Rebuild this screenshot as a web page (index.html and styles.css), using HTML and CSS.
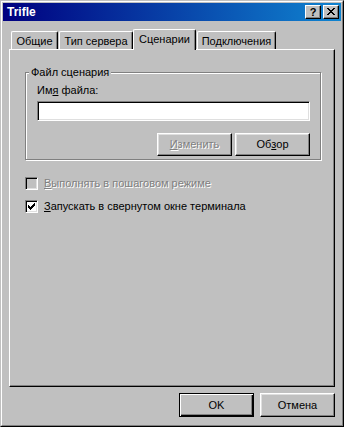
FILE: index.html
```html
<!DOCTYPE html>
<html>
<head>
<meta charset="utf-8">
<link rel="stylesheet" href="styles.css">
</head>
<body>
<div class="window">
  <div class="frame">
    <div class="titlebar">
      <span class="title">Trifle</span>
      <span class="tbtn help">?</span>
      <span class="tbtn close">
        <svg width="8" height="7" viewBox="0 0 8 7" shape-rendering="crispEdges">
          <path d="M0 0h2v1h-2zM6 0h2v1h-2zM1 1h2v1h-2zM5 1h2v1h-2zM2 2h4v1h-4zM3 3h2v1h-2zM2 4h4v1h-4zM1 5h2v1h-2zM5 5h2v1h-2zM0 6h2v1h-2zM6 6h2v1h-2z" fill="#000"/>
        </svg>
      </span>
    </div>
    <div class="body">
      <div class="tabs">
        <div class="tab t1">Общие</div>
        <div class="tab t2">Тип сервера</div>
        <div class="tab t3 active">Сценарии</div>
        <div class="tab t4">Подключения</div>
      </div>
      <div class="panel">
        <fieldset class="group">
          <legend>Файл сценария</legend>
          <div class="group-inner">
            <div class="label">Им<u>я</u> файла:</div>
            <div class="input"></div>
            <div class="btnrow">
              <div class="btn disabled"><span class="dtext"><u>И</u>зменить</span></div>
              <div class="btn">Об<u>з</u>ор</div>
            </div>
          </div>
        </fieldset>
        <div class="check first">
          <span class="box dis"></span>
          <span class="dtext"><u>В</u>ыполнять в пошаговом режиме</span>
        </div>
        <div class="check">
          <span class="box">
            <svg width="7" height="7" viewBox="0 0 7 7" shape-rendering="crispEdges">
              <path d="M0 2h1v3h-1zM1 3h1v3h-1zM2 4h1v3h-1zM3 3h1v3h-1zM4 2h1v3h-1zM5 1h1v3h-1zM6 0h1v3h-1z" fill="#000"/>
            </svg>
          </span>
          <span><u>З</u>апускать в свернутом окне терминала</span>
        </div>
      </div>
      <div class="footer">
        <div class="btn default">OK</div>
        <div class="btn">Отмена</div>
      </div>
    </div>
  </div>
</div>
</body>
</html>
```
FILE: styles.css
```css
html, body {
  margin: 0;
  padding: 0;
  background: #c0c0c0;
}
.window {
  width: 344px;
  height: 427px;
  box-sizing: border-box;
  border: 1px solid;
  border-color: #c0c0c0 #000 #000 #c0c0c0;
  background: #c0c0c0;
  display: flex;
  flex-direction: column;
  font: 11px "Liberation Sans", Arial, sans-serif;
  color: #000;
}
.frame {
  flex: 1;
  border: 1px solid;
  border-color: #fff #808080 #808080 #fff;
  padding: 1px;
  display: flex;
  flex-direction: column;
}
.titlebar {
  height: 18px;
  background: linear-gradient(to right, #000080, #1084d0);
  display: flex;
  align-items: center;
  padding: 0 2px 0 3px;
  color: #fff;
  font-weight: bold;
}
.title {
  flex: 1;
  line-height: 18px;
  font-size: 12px;
  padding-left: 1px;
}
.tbtn {
  width: 16px;
  height: 14px;
  box-sizing: border-box;
  background: #c0c0c0;
  border: 1px solid;
  border-color: #fff #000 #000 #fff;
  box-shadow: inset -1px -1px #808080;
  display: flex;
  align-items: center;
  justify-content: center;
  color: #000;
  font-size: 11px;
  font-weight: bold;
  line-height: 12px;
}
.tbtn.close {
  margin-left: 2px;
}
.tbtn.close svg {
  margin-top: -1px;
}
.body {
  flex: 1;
  padding: 8px 6px 7px 6px;
  display: flex;
  flex-direction: column;
}
.tabs {
  display: flex;
  align-items: flex-end;
  height: 20px;
  padding-left: 2px;
  position: relative;
  z-index: 1;
}
.tab {
  height: 18px;
  box-sizing: border-box;
  border-top: 1px solid #fff;
  border-left: 1px solid #fff;
  border-right: 1px solid #000;
  box-shadow: inset -1px 0 #808080;
  border-radius: 2px 2px 0 0;
  display: flex;
  align-items: center;
  justify-content: center;
  background: #c0c0c0;
  line-height: 13px;
  padding-top: 1px;
}
.t1 { width: 47px; }
.t2 { width: 74px; margin-left: 1px; }
.t3 { width: 63px; }
.t4 { width: 79px; margin-left: 1px; }
.tab.active {
  height: 21px;
  margin-bottom: -1px;
  padding-bottom: 2px;
}
.panel {
  flex: 1;
  border: 1px solid;
  border-color: #fff #000 #000 #fff;
  box-shadow: inset -1px -1px #808080;
  padding: 16px 13px 0 15px;
  display: flex;
  flex-direction: column;
}
.group {
  margin: 0;
  padding: 0;
  border: 1px solid #808080;
  box-shadow: inset 1px 1px #fff, 1px 1px #fff;
  min-width: 0;
}
.group legend {
  margin-left: 3px;
  padding: 0 2px;
  line-height: 13px;
  background: #c0c0c0;
}
.group-inner {
  padding: 5px 10px 3px 11px;
  display: flex;
  flex-direction: column;
}
.label {
  line-height: 13px;
}
.input {
  margin-top: 4px;
  height: 20px;
  box-sizing: border-box;
  background: #fff;
  border: 1px solid;
  border-color: #808080 #fff #fff #808080;
  box-shadow: inset 1px 1px #000, inset -1px -1px #dfdfdf;
}
.btnrow {
  display: flex;
  justify-content: flex-end;
  gap: 3px;
  margin-top: 12px;
}
.btn {
  width: 75px;
  height: 23px;
  box-sizing: border-box;
  border: 1px solid;
  border-color: #fff #000 #000 #fff;
  box-shadow: inset -1px -1px #808080, inset 1px 1px #dfdfdf;
  background: #c0c0c0;
  display: flex;
  align-items: center;
  justify-content: center;
  line-height: 13px;
}
.dtext {
  color: #808080;
  text-shadow: 1px 1px 0 #fff;
}
.check {
  display: flex;
  align-items: center;
  height: 13px;
  margin-top: 10px;
  gap: 6px;
  line-height: 13px;
}
.check.first {
  margin-top: 17px;
}
.box {
  width: 13px;
  height: 13px;
  box-sizing: border-box;
  border: 1px solid;
  border-color: #808080 #fff #fff #808080;
  box-shadow: inset 1px 1px #000, inset -1px -1px #dfdfdf;
  background: #fff;
  display: flex;
  align-items: center;
  justify-content: center;
}
.box.dis {
  background: #c0c0c0;
}
.footer {
  display: flex;
  justify-content: flex-end;
  gap: 6px;
  margin-top: 6px;
}
.footer .btn {
  height: 24px;
}
.btn.default {
  border-color: #000;
  box-shadow: inset 1px 1px #fff, inset -1px -1px #000, inset -2px -2px #808080;
}
u {
  text-decoration: underline;
  text-underline-offset: 1px;
}
```
